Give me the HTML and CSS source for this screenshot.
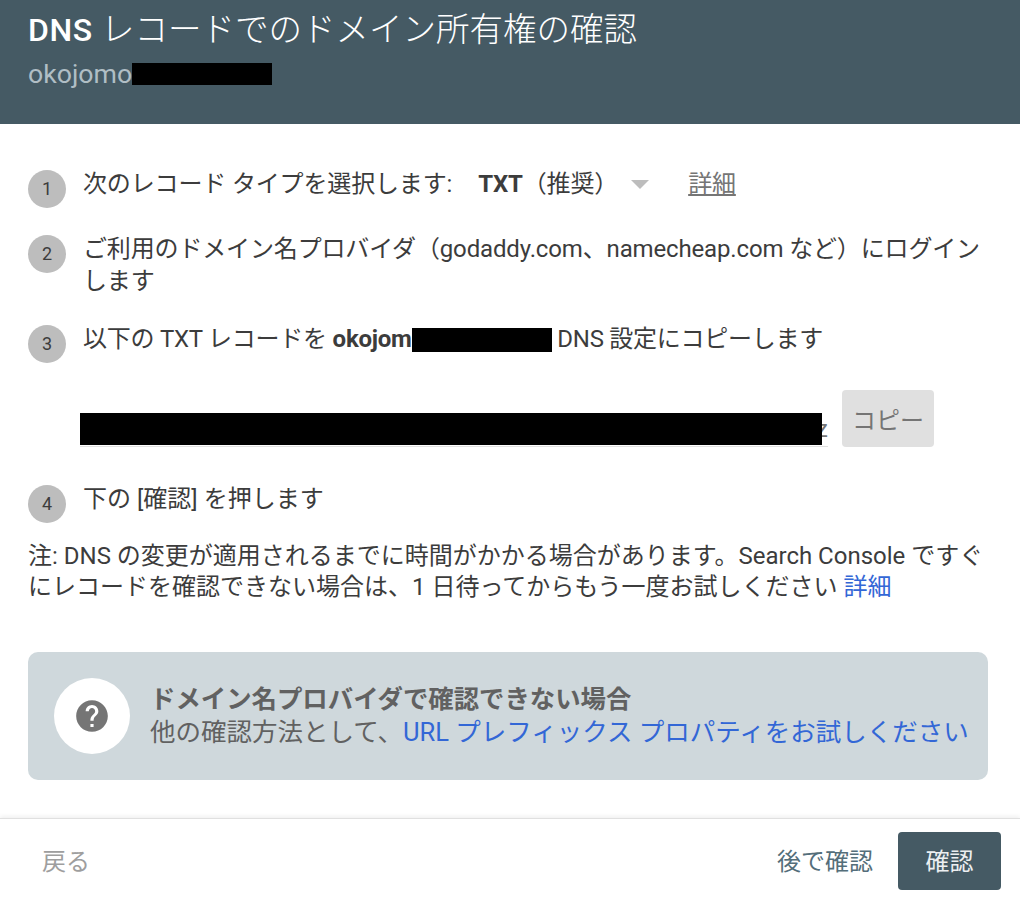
FILE: index.html
```html
<!DOCTYPE html>
<html lang="ja">
<head>
    <meta charset="UTF-8">
    <meta name="viewport" content="width=device-width, initial-scale=1.0">
    <title>DNS レコードでのドメイン所有権の確認</title>
    <link rel="stylesheet" href="styles.css">
</head>
<body>
    <div class="dialog">
        <header class="header">
            <h1><span class="dns">DNS</span> レコードでのドメイン所有権の確認</h1>
            <div class="domain">okojomo<span class="redact redact-domain"></span></div>
        </header>

        <main class="content">
            <div class="step step-1">
                <span class="num">1</span>
                <div class="step-text">次のレコード タイプを選択します:<span class="type"><b>TXT</b>（推奨）</span><span class="caret"></span><a class="more" href="#">詳細</a></div>
            </div>
            <div class="step step-2">
                <span class="num">2</span>
                <div class="step-text">ご利用のドメイン名プロバイダ（godaddy.com、namecheap.com など）にログインします</div>
            </div>
            <div class="step step-3">
                <span class="num">3</span>
                <div class="step-text">以下の TXT レコードを <b>okojom</b><span class="redact redact-name"></span> DNS 設定にコピーします</div>
            </div>
            <div class="record">
                <div class="record-value"><span class="redact redact-record"></span><span class="record-end">z</span></div>
                <button class="copy">コピー</button>
            </div>
            <div class="step step-4">
                <span class="num">4</span>
                <div class="step-text">下の [確認] を押します</div>
            </div>
            <p class="note">注: DNS の変更が適用されるまでに時間がかかる場合があります。Search Console ですぐにレコードを確認できない場合は、1 日待ってからもう一度お試しください <a href="#">詳細</a></p>

            <div class="help">
                <div class="help-icon">
                    <svg width="38" height="38" viewBox="0 0 24 24"><path fill="#757575" d="M12 2C6.48 2 2 6.48 2 12s4.48 10 10 10 10-4.48 10-10S17.52 2 12 2zm1 17h-2v-2h2v2zm2.07-7.75l-.9.92C13.45 12.9 13 13.5 13 15h-2v-.5c0-1.1.45-2.1 1.17-2.83l1.24-1.26c.37-.36.59-.86.59-1.41 0-1.1-.9-2-2-2s-2 .9-2 2H8c0-2.21 1.79-4 4-4s4 1.79 4 4c0 .88-.36 1.68-.93 2.25z"/></svg>
                </div>
                <div class="help-text">
                    <div class="help-title">ドメイン名プロバイダで確認できない場合</div>
                    <div>他の確認方法として、<a href="#">URL プレフィックス プロパティをお試しください</a></div>
                </div>
            </div>
        </main>

        <footer class="footer">
            <button class="btn btn-back">戻る</button>
            <button class="btn btn-later">後で確認</button>
            <button class="btn btn-verify">確認</button>
        </footer>
    </div>
</body>
</html>
```

FILE: styles.css
```css
* {
    box-sizing: border-box;
}
body {
    margin: 0;
    background: white;
    font-family: Roboto, "Noto Sans CJK JP", sans-serif;
    color: #3c3c3c;
    font-size: 24px;
}
.dialog {
    height: 900px;
    display: flex;
    flex-direction: column;
}
.header {
    height: 124px;
    padding: 8px 28px 0;
    background-color: #455a64;
    color: white;
}
.header h1 {
    margin: 0;
    font-size: 33.5px;
    line-height: 44px;
    font-weight: 300;
}
.dns {
    font-size: 32px;
    font-weight: 500;
    letter-spacing: 0.6px;
}
.domain {
    margin-top: 2px;
    color: #b0bec5;
    font-size: 26.7px;
    line-height: 40px;
    display: flex;
    align-items: center;
}
.redact {
    display: inline-block;
    background: black;
}
.redact-domain {
    width: 140px;
    height: 22px;
}
.content {
    flex: 1;
    padding: 0 32px 0 28px;
}
.step {
    display: flex;
    line-height: 32px;
}
.step-text {
    letter-spacing: -0.15px;
}
.step-1 {
    margin-top: 44px;
}
.step-2 {
    margin-top: 25px;
}
.step-3 {
    margin-top: 26px;
}
.step-3 .step-text {
    letter-spacing: -0.25px;
}
.step-4 {
    margin-top: 36px;
}
.step-4 .step-text {
    letter-spacing: 0;
}
.num {
    flex: none;
    width: 38px;
    height: 38px;
    margin: 2px 17px 0 0;
    border-radius: 50%;
    background: #bdbdbd;
    font-size: 18px;
    line-height: 38px;
    text-align: center;
}
.type {
    margin-left: 26px;
}
.caret {
    display: inline-block;
    margin: 0 39px 2px 13px;
    border-left: 9px solid transparent;
    border-right: 9px solid transparent;
    border-top: 9px solid #bdbdbd;
    vertical-align: middle;
}
.more {
    color: #757575;
}
.type b {
    font-weight: 500;
}
.step-text b {
    font-weight: 700;
}
.redact-name {
    width: 140px;
    height: 24px;
    vertical-align: -5px;
}
.record {
    display: flex;
    align-items: flex-end;
    margin: 27px 0 0 52px;
}
.record-value {
    display: flex;
    width: 748px;
    height: 56px;
    padding-top: 22px;
    border-bottom: 1px solid #e0e0e0;
    margin-right: 14px;
    color: #757575;
    line-height: 32px;
}
.redact-record {
    position: relative;
    z-index: 1;
    width: 742px;
    height: 32px;
    flex: none;
}
/* last character of the value sticks out from under the black bar */
.record-end {
    margin-left: -6px;
}
.copy {
    width: 92px;
    height: 57px;
    border: none;
    border-radius: 4px;
    background: #e0e0e0;
    color: #757575;
    font: inherit;
}
.note {
    margin: 18px 0 0;
    line-height: 31px;
}
.note a, .help a {
    color: #3367d6;
    text-decoration: none;
}
.help {
    display: flex;
    align-items: center;
    height: 128px;
    margin-top: 49px;
    padding-left: 26px;
    border-radius: 10px;
    background-color: #cfd8dc;
    color: #616161;
    font-size: 25.5px;
    line-height: 33px;
}
.help-icon {
    display: flex;
    align-items: center;
    justify-content: center;
    flex: none;
    width: 76px;
    height: 76px;
    margin-right: 20px;
    border-radius: 50%;
    background: white;
}
.help-title {
    font-weight: 700;
    font-size: 25.4px;
}
.footer {
    display: flex;
    align-items: center;
    height: 82px;
    padding: 2px 19px 0 14px;
    border-top: 1px solid #e0e0e0;
    box-shadow: 0 -2px 4px rgba(0, 0, 0, 0.06);
}
.btn {
    height: 58px;
    border: none;
    border-radius: 4px;
    background: none;
    font: inherit;
    padding: 0 28px 3px;
    color: #546e7a;
}
.btn-back {
    color: #9e9e9e;
    margin-right: auto;
}
.btn-later {
    margin-right: -3px;
}
.btn-verify {
    width: 103px;
    padding: 0 0 3px;
    background-color: #455a64;
    color: #eceff1;
}
```
